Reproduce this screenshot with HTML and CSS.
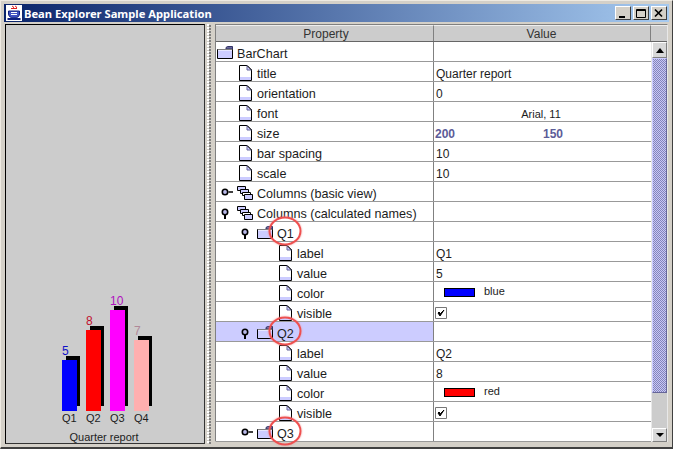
FILE: index.html
```html
<!DOCTYPE html>
<html lang="en">
<head>
<meta charset="utf-8">
<title>Bean Explorer Sample Application</title>
<link rel="stylesheet" href="styles.css">
</head>
<body>
<svg class="defs" width="0" height="0" aria-hidden="true">
  <defs>
    <symbol id="folder" viewBox="0 0 16 13">
      <path d="M9 3V1.500L10.500 .5H15.500V3Z" fill="#666699" stroke="#333366"/>
      <path d="M.5 3.500H15.500V12.500H.5Z" fill="#ccccff" stroke="#000"/>
      <path d="M1 4H15" stroke="#fff"/>
    </symbol>
    <symbol id="doc" viewBox="0 0 13 16">
      <path d="M.5 .5H8L12.500 5V15.500H.5Z" fill="#fff" stroke="#000"/>
      <path d="M1 12H12V15H1Z" fill="#ccccff"/>
      <path d="M8 .5V5H12.500" fill="#ccccff" stroke="#666699"/>
      <path d="M8 .5L12.500 5" stroke="#000" fill="none"/>
    </symbol>
    <symbol id="open" viewBox="0 0 13 14">
      <circle cx="5" cy="5" r="2.700" fill="#b8b8e8" stroke="#000" stroke-width="1.600"/>
      <path d="M5 8V12" stroke="#000" stroke-width="2"/>
    </symbol>
    <symbol id="closed" viewBox="0 0 13 14">
      <circle cx="5" cy="5" r="2.700" fill="#b8b8e8" stroke="#000" stroke-width="1.600"/>
      <path d="M8.500 5H13" stroke="#000" stroke-width="1.500"/>
    </symbol>
    <symbol id="stack" viewBox="0 0 16 14">
      <path d="M.5 4.500V.5H8.500V4.500Z" fill="#ccccff" stroke="#000"/>
      <path d="M3.500 7.500V3.500H11.500V7.500Z" fill="#ccccff" stroke="#000"/>
      <path d="M5.500 9.500V6.500H13.500V9.500Z" fill="#fff" stroke="#000"/>
      <path d="M7.500 13.500V8.500H15.500V13.500Z" fill="#ccccff" stroke="#000"/>
    </symbol>
    <symbol id="check" viewBox="0 0 12 12">
      <path d="M.5 .5H11.500V11.500H.5Z" fill="#fff" stroke="#777"/>
      <path d="M3 6L5 9L9 3L5.500 6.500L4 5Z" fill="#000" stroke="#000"/>
    </symbol>
  </defs>
</svg>
<div class="window">
  <header class="titlebar">
    <svg class="app-icon" viewBox="0 0 16 16" width="16" height="16" aria-hidden="true">
      <rect width="16" height="16" fill="#fff"/>
      <path d="M6 1Q9 2 7 3.500M9 1Q12 2 10 3.500M5 3.500H11" stroke="#e02020" fill="none"/>
      <path d="M2.500 6H13.500V9Q13 13 8 13Q3 13 2.500 9Z" fill="#4050c0" stroke="#102080"/>
      <path d="M5 7.500H11M5 9.500H11" stroke="#fff"/>
      <path d="M1.500 14H14.500" stroke="#102080" stroke-width="2"/>
    </svg>
    <span class="title-text">Bean Explorer Sample Application</span>
    <div class="win-buttons">
      <span class="win-btn"><svg width="14" height="11" viewBox="0 0 14 11" aria-hidden="true"><path d="M3 9H9" stroke="#000" stroke-width="2"/></svg></span>
      <span class="win-btn"><svg width="14" height="11" viewBox="0 0 14 11" aria-hidden="true"><path d="M2.500 1.500H11.500V9.500H2.500ZM2.500 2.500H11.500" stroke="#000" fill="none"/></svg></span>
      <span class="win-btn win-btn-close"><svg width="14" height="11" viewBox="0 0 14 11" aria-hidden="true"><path d="M3 1.500L10 8.500M10 1.500L3 8.500" stroke="#000" stroke-width="1.700" fill="none"/></svg></span>
    </div>
  </header>
  <main class="content">
    <section class="chart-pane">
      <div class="bars">
        <div class="bar-col"><span class="bar-value v-blue">5</span><div class="bar b-blue" style="height:51px"></div><span class="bar-label">Q1</span></div>
        <div class="bar-col"><span class="bar-value v-red">8</span><div class="bar b-red" style="height:81px"></div><span class="bar-label">Q2</span></div>
        <div class="bar-col"><span class="bar-value v-magenta">10</span><div class="bar b-magenta" style="height:101px"></div><span class="bar-label">Q3</span></div>
        <div class="bar-col"><span class="bar-value v-pink">7</span><div class="bar b-pink" style="height:71px"></div><span class="bar-label">Q4</span></div>
      </div>
      <div class="chart-title">Quarter report</div>
    </section>
    <div class="splitter"></div>
    <section class="table-pane">
      <div class="table">
        <div class="thead">
          <div class="th th-prop">Property</div>
          <div class="th th-val">Value</div>
          <div class="th-corner"></div>
        </div>
        <div class="tbody">
          <div class="rows">
            <div class="row"><div class="name l-root"><svg class="i-folder"><use href="#folder"/></svg><span>BarChart</span></div><div class="val"></div></div>
            <div class="row"><div class="name l-doc1"><svg class="i-doc"><use href="#doc"/></svg><span>title</span></div><div class="val">Quarter report</div></div>
            <div class="row"><div class="name l-doc1"><svg class="i-doc"><use href="#doc"/></svg><span>orientation</span></div><div class="val">0</div></div>
            <div class="row"><div class="name l-doc1"><svg class="i-doc"><use href="#doc"/></svg><span>font</span></div><div class="val val-font">Arial, 11</div></div>
            <div class="row"><div class="name l-doc1"><svg class="i-doc"><use href="#doc"/></svg><span>size</span></div><div class="val val-size"><b>200</b><b>150</b></div></div>
            <div class="row"><div class="name l-doc1"><svg class="i-doc"><use href="#doc"/></svg><span>bar spacing</span></div><div class="val">10</div></div>
            <div class="row"><div class="name l-doc1"><svg class="i-doc"><use href="#doc"/></svg><span>scale</span></div><div class="val">10</div></div>
            <div class="row"><div class="name l-node1"><svg class="i-handle"><use href="#closed"/></svg><svg class="i-stack"><use href="#stack"/></svg><span>Columns (basic view)</span></div><div class="val"></div></div>
            <div class="row"><div class="name l-node1"><svg class="i-handle"><use href="#open"/></svg><svg class="i-stack"><use href="#stack"/></svg><span>Columns (calculated names)</span></div><div class="val"></div></div>
            <div class="row"><div class="name l-node2"><svg class="i-handle"><use href="#open"/></svg><svg class="i-folder"><use href="#folder"/></svg><span class="circled">Q1</span></div><div class="val"></div></div>
            <div class="row"><div class="name l-doc3"><svg class="i-doc"><use href="#doc"/></svg><span>label</span></div><div class="val">Q1</div></div>
            <div class="row"><div class="name l-doc3"><svg class="i-doc"><use href="#doc"/></svg><span>value</span></div><div class="val">5</div></div>
            <div class="row"><div class="name l-doc3"><svg class="i-doc"><use href="#doc"/></svg><span>color</span></div><div class="val val-color"><i class="swatch s-blue"></i><span>blue</span></div></div>
            <div class="row"><div class="name l-doc3"><svg class="i-doc"><use href="#doc"/></svg><span>visible</span></div><div class="val val-check"><svg class="i-check"><use href="#check"/></svg></div></div>
            <div class="row row-selected"><div class="name l-node2"><svg class="i-handle"><use href="#open"/></svg><svg class="i-folder"><use href="#folder"/></svg><span class="circled">Q2</span></div><div class="val"></div></div>
            <div class="row"><div class="name l-doc3"><svg class="i-doc"><use href="#doc"/></svg><span>label</span></div><div class="val">Q2</div></div>
            <div class="row"><div class="name l-doc3"><svg class="i-doc"><use href="#doc"/></svg><span>value</span></div><div class="val">8</div></div>
            <div class="row"><div class="name l-doc3"><svg class="i-doc"><use href="#doc"/></svg><span>color</span></div><div class="val val-color"><i class="swatch s-red"></i><span>red</span></div></div>
            <div class="row"><div class="name l-doc3"><svg class="i-doc"><use href="#doc"/></svg><span>visible</span></div><div class="val val-check"><svg class="i-check"><use href="#check"/></svg></div></div>
            <div class="row"><div class="name l-node2"><svg class="i-handle"><use href="#closed"/></svg><svg class="i-folder"><use href="#folder"/></svg><span class="circled">Q3</span></div><div class="val"></div></div>
          </div>
          <div class="scrollbar">
            <div class="sb-btn"><i class="arrow-up"></i></div>
            <div class="sb-thumb"></div>
            <div class="sb-track"></div>
            <div class="sb-btn sb-btn-down"><i class="arrow-down"></i></div>
          </div>
        </div>
      </div>
    </section>
  </main>
</div>
</body>
</html>
```

FILE: styles.css
```css
* { box-sizing: border-box; }
html, body { margin: 0; padding: 0; }
body {
  width: 673px;
  height: 449px;
  overflow: hidden;
  background: #d4d0c8;
  font-family: "Liberation Sans", Arial, sans-serif;
  font-size: 12px;
  color: #1c1c1c;
}
.defs { position: absolute; }
.window {
  width: 673px;
  height: 449px;
  display: flex;
  flex-direction: column;
  padding: 3px 3px 0;
  background: #d4d0c8;
  border-top: 1px solid #eeeae2;
  border-right: 1px solid #404040;
  border-bottom: 2px solid #404040;
  border-left: 1px solid #eeeae2;
}
.titlebar {
  height: 18px;
  flex: none;
  display: flex;
  align-items: center;
  padding-left: 2px;
  background: linear-gradient(to right, #0a246a, #a6caf0);
  color: #fff;
}
.app-icon { flex: none; }
.title-text {
  margin-left: 2px;
  font-family: "Noto Sans", sans-serif;
  font-weight: 700;
  font-size: 11.2px;
}
.win-buttons {
  margin-left: auto;
  margin-right: 2px;
  display: flex;
  gap: 2px;
}
.win-btn {
  width: 16px;
  height: 14px;
  display: flex;
  align-items: center;
  justify-content: center;
  background: #d4d0c8;
  border: 1px solid;
  border-color: #fff #404040 #404040 #fff;
}
.content {
  flex: 1;
  min-height: 0;
  display: flex;
  margin-top: 2px;
  padding-left: 1px;
}
.chart-pane {
  width: 200px;
  height: 420px;
  flex: none;
  display: flex;
  flex-direction: column;
  justify-content: flex-end;
  background: #cccccc;
  border: 1px solid #000;
  border-right-color: #333;
  border-bottom-color: #333;
  font-size: 11px;
}
.bars {
  display: flex;
  align-items: flex-end;
  gap: 9px;
  padding-left: 56px;
}
.bar-col {
  width: 15px;
  display: flex;
  flex-direction: column;
  white-space: nowrap;
  position: relative;
  z-index: 0;
}
.bar-value { line-height: 12px; margin-bottom: 3px; font-size: 12px; }
.v-blue { color: #1010c8; }
.v-red { color: #c01030; }
.v-magenta { color: #b010c0; }
.v-pink { color: #b08898; }
.bar { position: relative; }
.bar::before {
  content: "";
  position: absolute;
  z-index: -1;
  left: 4px;
  right: -3px;
  top: -4px;
  bottom: 5px;
  background: #000;
}
.b-blue { background: #0000ff; }
.b-red { background: #ff0000; }
.b-magenta { background: #ff00ff; }
.b-pink { background: #ffafaf; }
.bar-label { line-height: 13px; margin-top: 1px; }
.chart-title {
  text-align: center;
  line-height: 11px;
  margin-top: 7px;
  padding-right: 2px;
  font-size: 11px;
}
.splitter {
  width: 10px;
  height: 420px;
  flex: none;
  background:
    radial-gradient(circle at 1px 1px, #ffffff 0.8px, transparent 1px) 2px 0 / 3px 3px,
    radial-gradient(circle at 1px 1px, #808080 0.8px, transparent 1px) 4px 1px / 3px 3px,
    #d4d0c8;
  background-repeat: repeat-y;
}
.table-pane {
  width: 453px;
  height: 418px;
  flex: none;
  border-top: 1px solid #808080;
  border-left: 1px solid #808080;
  border-right: 1px solid #e8e8e8;
  border-bottom: 1px solid #e8e8e8;
}
.table { height: 100%; display: flex; flex-direction: column; }
.thead {
  display: flex;
  height: 17px;
  flex: none;
  background: #cccccc;
  border-bottom: 1px solid #666;
  color: #333;
  line-height: 16px;
}
.th { text-align: center; border-top: 1px solid #eee; }
.th-prop { width: 218px; border-right: 1px solid #808080; padding-left: 3px; }
.th-val { width: 217px; border-right: 1px solid #808080; padding-right: 1px; }
.th-corner { flex: 1; border-top: 1px solid #eee; }
.tbody { display: flex; flex: 1; min-height: 0; }
.rows { width: 435px; flex: none; background: #fff; }
.row {
  display: flex;
  height: 20px;
  border-bottom: 1px solid #999;
  line-height: 24px;
  white-space: nowrap;
}
.name {
  width: 218px;
  flex: none;
  display: flex;
  align-items: flex-start;
  border-right: 1px solid #808080;
  font-size: 12.6px;
}
.row-selected .name { background: #ccccff; }
.val { flex: 1; padding-left: 2px; min-width: 0; }
.l-root { padding-left: 1px; }
.l-doc1 { padding-left: 23px; }
.l-node1 { padding-left: 4px; }
.l-node2 { padding-left: 24px; }
.l-doc3 { padding-left: 63px; }
.i-folder { width: 16px; height: 13px; flex: none; margin: 4px 4px 0 0; }
.i-doc { width: 13px; height: 16px; flex: none; margin: 3px 5px 0 0; }
.i-handle { width: 13px; height: 14px; flex: none; margin: 5px 0 0 0; }
.i-stack { width: 16px; height: 14px; flex: none; margin: 4px 4px 0 4px; }
.row .i-handle + .i-folder { margin-left: 4px; }
.circled { position: relative; }
.circled::after {
  content: "";
  position: absolute;
  left: 50%;
  top: calc(50% - 3px);
  width: 29px;
  height: 25px;
  transform: translate(-50%, -50%);
  border: 2px solid #ee5050;
  border-radius: 50%;
  box-shadow: 0 0 2px #f09090;
}
.val-font { text-align: center; font-size: 11px; padding: 0 3px 0 0; }
.val-size {
  display: grid;
  grid-template-columns: 1fr 1fr;
  color: #5c5c98;
  padding-left: 1px;
}
.val-color {
  display: flex;
  align-items: flex-start;
  padding-left: 10px;
  font-size: 11px;
  line-height: 18px;
}
.swatch {
  width: 31px;
  height: 9px;
  flex: none;
  margin: 6px 9px 0 0;
  border: 1px solid #000;
}
.s-blue { background: #0000ff; }
.s-red { background: #ff0000; }
.val-check { padding-left: 1px; }
.i-check { width: 12px; height: 12px; display: block; margin-top: 5px; }
.scrollbar {
  flex: 1;
  display: flex;
  flex-direction: column;
  height: 400px;
  background: #cccccc;
  border-left: 1px solid #e8e8e8;
}
.sb-btn {
  height: 16px;
  flex: none;
  display: flex;
  align-items: center;
  justify-content: center;
  background: #d8d8d8;
  border: 1px solid;
  border-color: #fff #808080 #808080 #fff;
}
.sb-btn-down { height: 14px; }
.arrow-up {
  border-left: 4px solid transparent;
  border-right: 4px solid transparent;
  border-bottom: 5px solid #000;
}
.arrow-down {
  border-left: 4px solid transparent;
  border-right: 4px solid transparent;
  border-top: 4px solid #000;
}
.sb-thumb {
  height: 335px;
  flex: none;
  border: 1px solid;
  border-color: #ccccff #666699 #666699 #ccccff;
  background: repeating-conic-gradient(#c8c8f4 0 25%, #8484bc 0 50%) 0 0 / 2px 2px;
}
.sb-track { flex: 1; background: #cccccc; }
```
